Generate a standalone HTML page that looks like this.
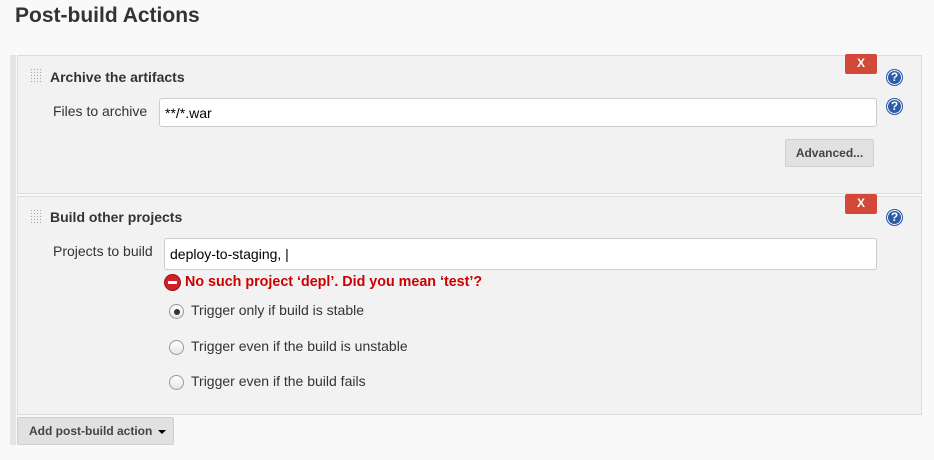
<!DOCTYPE html>
<html><head><style>
body{margin:0;width:934px;height:460px;background:#f9f9f9;font-family:"Liberation Sans",sans-serif;position:relative;overflow:hidden;color:#333}
.a{position:absolute}
h1{position:absolute;left:15px;top:4px;margin:0;font-size:21px;font-weight:bold;color:#333}
.bar{left:10px;top:55px;width:6px;height:390px;background:#e4e4e4}
.panel{left:17px;width:903px;background:#f2f2f2;border:1px solid #dcdcdc}
.grip{width:12px;height:16px;background-image:radial-gradient(#aaa 0.7px,transparent 0.8px);background-size:3px 3px}
.title{font-size:14px;font-weight:bold;color:#333}
.lbl{font-size:14px;color:#333}
.inp{background:#fff;border:1px solid #ccc;border-radius:3px;height:29px;box-sizing:border-box;font-size:14px;padding:6px 5px;color:#000}
.x{width:32px;height:20px;background:#d24939;border-radius:2px;color:#fff;font-size:12px;font-weight:bold;text-align:center;line-height:18px}
.help{width:15px;height:15px;border-radius:50%;background:#2c5ba8;border:1px solid #2c5ba8;box-shadow:inset 0 0 0 1px #fff;color:#fff;font-size:12px;font-weight:bold;text-align:center;line-height:15px}
.btn{background:#e1e1e1;border:1px solid #cfcfcf;border-radius:2px;font-size:12px;font-weight:bold;color:#444;box-sizing:border-box}
.radio{width:15px;height:15px;border-radius:50%;border:1px solid #999;background:linear-gradient(#fff,#e6e6e6);box-sizing:border-box}
</style></head><body>
<h1>Post-build Actions</h1>
<div class="a bar"></div>
<div class="a panel" style="top:55px;height:137px"></div>
<div class="a grip" style="left:30px;top:68px"></div>
<div class="a title" style="left:50px;top:69px">Archive the artifacts</div>
<div class="a x" style="left:845px;top:54px">X</div>
<div class="a help" style="left:886px;top:69px">?</div>
<div class="a lbl" style="left:53px;top:103px">Files to archive</div>
<div class="a inp" style="left:159px;top:98px;width:718px">**/*.war</div>
<div class="a help" style="left:886px;top:98px">?</div>
<div class="a btn" style="left:785px;top:139px;width:89px;height:28px;line-height:26px;text-align:center">Advanced...</div>

<div class="a panel" style="top:196px;height:217px"></div>
<div class="a grip" style="left:30px;top:209px"></div>
<div class="a title" style="left:50px;top:209px">Build other projects</div>
<div class="a x" style="left:845px;top:194px">X</div>
<div class="a help" style="left:886px;top:209px">?</div>
<div class="a lbl" style="left:53px;top:243px">Projects to build</div>
<div class="a inp" style="left:164px;top:238px;width:713px;height:32px;padding-top:7px">deploy-to-staging, |</div>
<div class="a" style="left:165px;top:275px;width:15px;height:15px;border-radius:50%;background:#d0202a;box-shadow:0 0 0 1px #a01010"><div class="a" style="left:3px;top:6px;width:9px;height:3px;background:#fff"></div></div>
<div class="a" style="left:185px;top:274px;font-size:14.3px;font-weight:bold;color:#cc0000">No such project ‘depl’. Did you mean ‘test’?</div>
<div class="a radio" style="left:169px;top:304px"><div class="a" style="left:3.5px;top:3.5px;width:6px;height:6px;border-radius:50%;background:#333"></div></div>
<div class="a lbl" style="left:191px;top:302px">Trigger only if build is stable</div>
<div class="a radio" style="left:169px;top:340px"></div>
<div class="a lbl" style="left:191px;top:338px">Trigger even if the build is unstable</div>
<div class="a radio" style="left:169px;top:375px"></div>
<div class="a lbl" style="left:191px;top:373px">Trigger even if the build fails</div>

<div class="a btn" style="left:17px;top:417px;width:157px;height:28px;line-height:26px;padding-left:11px">Add post-build action<span style="position:absolute;left:140px;top:12px;border-left:4px solid transparent;border-right:4px solid transparent;border-top:4px solid #000"></span></div>
</body></html>
